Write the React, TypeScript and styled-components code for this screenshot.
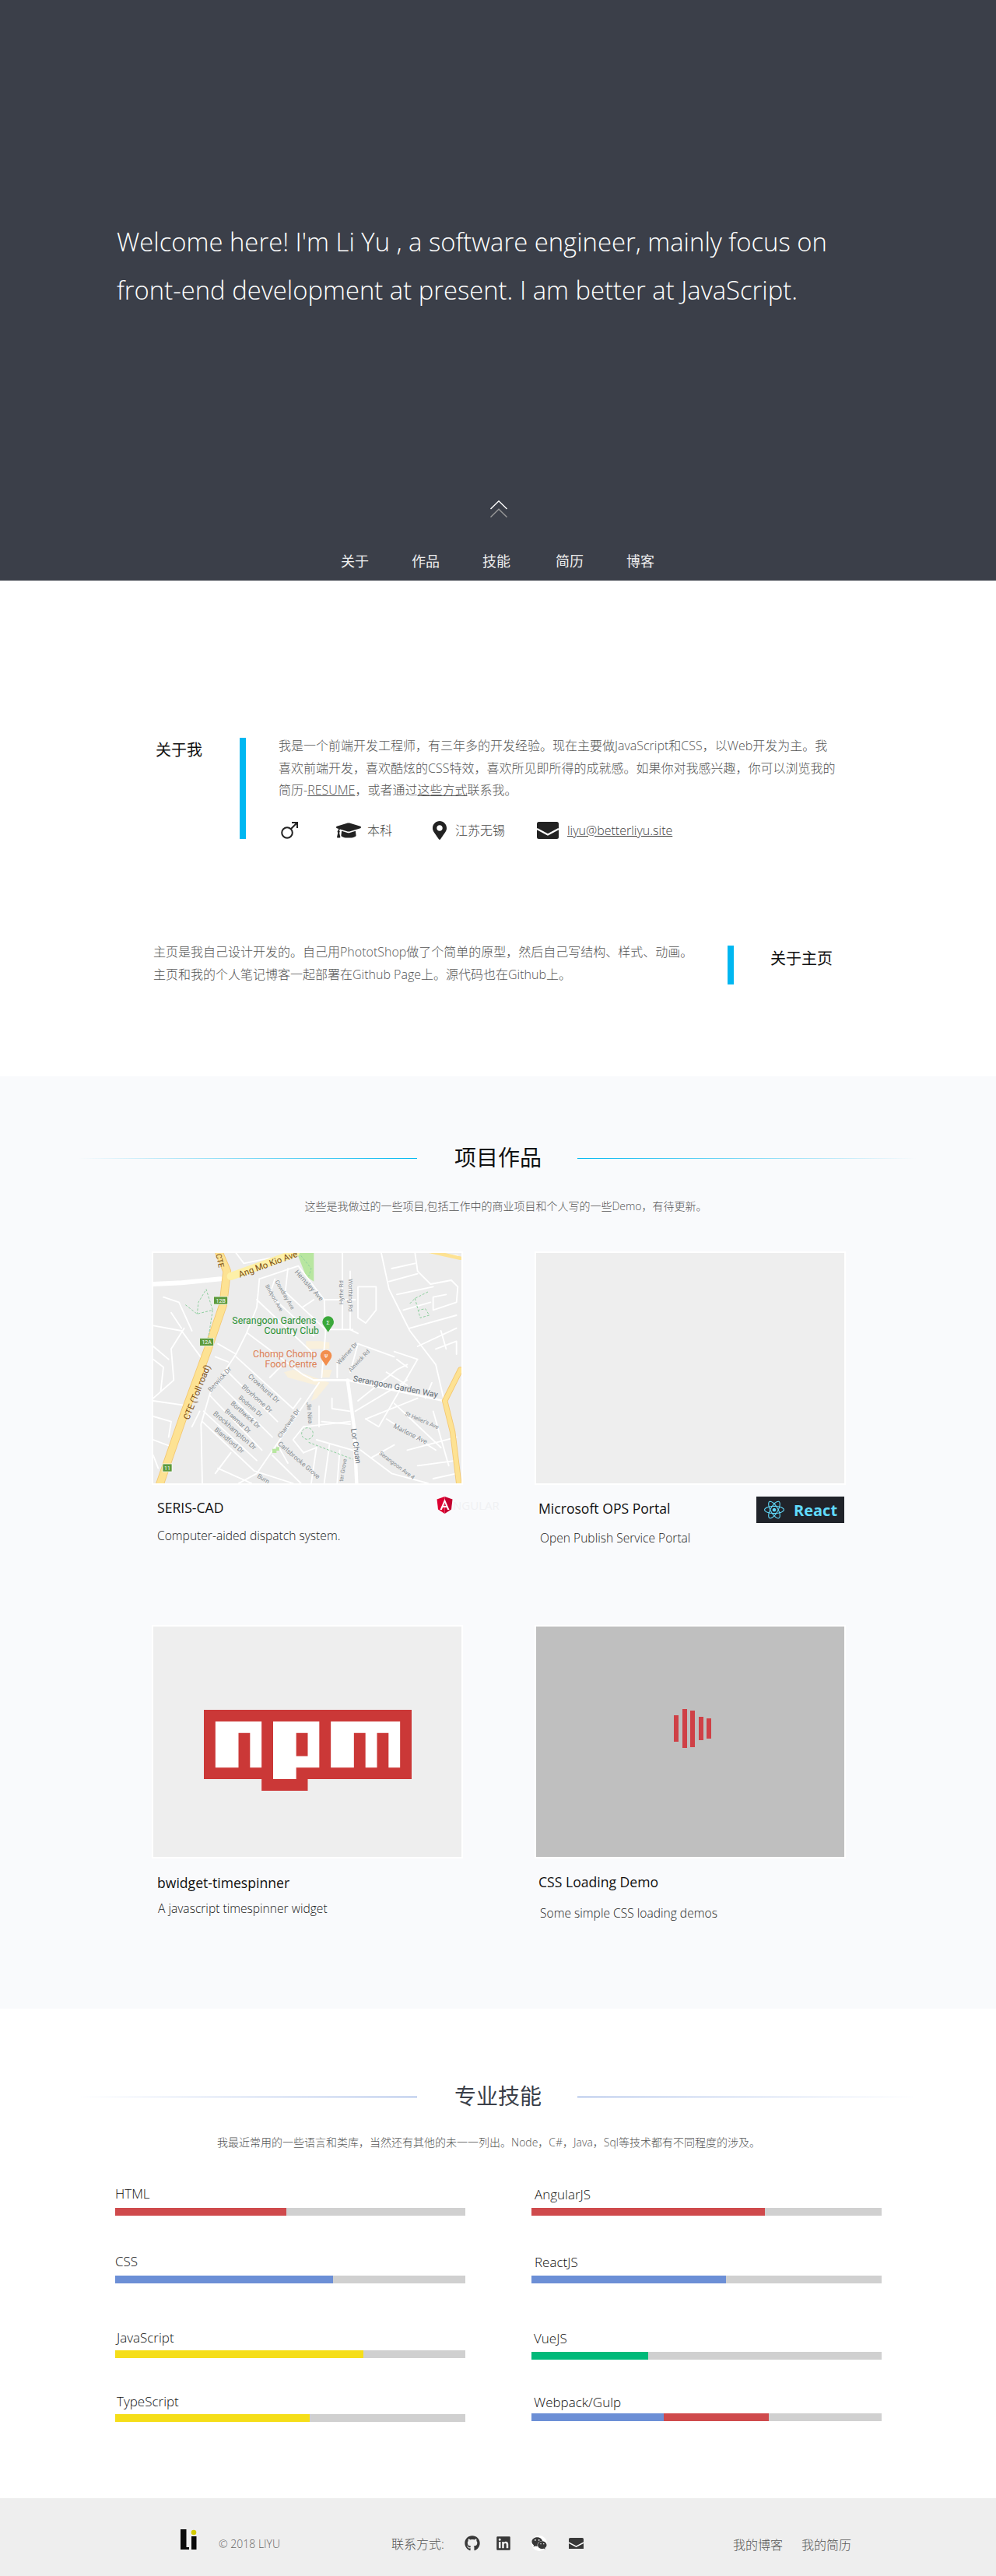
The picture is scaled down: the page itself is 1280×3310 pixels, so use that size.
import React from 'react';
import styled, { createGlobalStyle } from 'styled-components';
import { FaGithub, FaLinkedin, FaWeixin, FaReact, FaGraduationCap, FaMapMarkerAlt } from 'react-icons/fa';

const GlobalStyle = createGlobalStyle`
  html, body { margin: 0; padding: 0; background: #fff; }
  body {
    font-family: "Open Sans", "Noto Sans CJK SC", sans-serif;
    font-weight: 300;
    color: #444;
  }
  a { color: inherit; }
`;

const Page = styled.div`
  width: 1280px;
  height: 3310px;
  overflow: hidden;
`;

const Hero = styled.header`
  height: 746px;
  box-sizing: border-box;
  background: #3b3f49;
  color: #fff;
  display: flex;
  flex-direction: column;
  padding-top: 280px;
`;

const HeroText = styled.h1`
  margin: 0 0 0 150px;
  width: 1000px;
  font-size: 32.8px;
  line-height: 62px;
  font-weight: 300;
`;

const ChevronWrap = styled.div`
  margin: 239px 0 0 630px;
  height: 22px;
`;

const Nav = styled.nav`
  display: flex;
  margin: 44px 0 0 438px;
  gap: 55px;
  font-size: 18px;
  line-height: 24px;
  font-weight: 400;
  color: #eee;
`;

const NavItem = styled.span<{ $extra?: number }>`
  margin-left: ${(p) => p.$extra ?? 0}px;
`;

const AboutBlock = styled.section<{ $top: number }>`
  display: flex;
  align-items: flex-start;
  margin-top: ${(p) => p.$top}px;
`;

const SideTitle = styled.h3<{ $width: number; $indent: number; $down: number }>`
  margin: ${(p) => p.$down}px 0 0 ${(p) => p.$indent}px;
  width: ${(p) => p.$width}px;
  font-size: 20px;
  line-height: 28px;
  font-weight: 400;
  color: #111;
`;

const AccentBar = styled.div<{ $height: number; $top?: number; $left?: number }>`
  width: 8px;
  height: ${(p) => p.$height}px;
  margin: ${(p) => p.$top ?? 0}px 0 0 ${(p) => p.$left ?? 0}px;
  background: #00b7f1;
  flex: none;
`;

const AboutBody = styled.div`
  margin: -4px 0 0 42px;
  width: 720px;
  height: 134px;
  font-size: 16px;
  line-height: 28.5px;
  color: #555;
`;

const Paragraph = styled.p`
  margin: 0 0 0 197px;
  width: 700px;
  flex: none;
  font-size: 16px;
  line-height: 28.5px;
  color: #555;
`;

const InfoRow = styled.div`
  display: flex;
  align-items: center;
  height: 30px;
  margin-top: 22.5px;
  font-size: 16px;
  color: #444;
`;

const InfoItem = styled.span<{ $width: number; $gap?: number; $indent?: number }>`
  display: flex;
  align-items: center;
  gap: ${(p) => p.$gap ?? 8}px;
  width: ${(p) => p.$width}px;
  padding-left: ${(p) => p.$indent ?? 0}px;
  box-sizing: border-box;
`;

const ProjectSection = styled.section`
  margin-top: 117px;
  height: 1198px;
  box-sizing: border-box;
  background: #f9fafc;
  padding-top: 84px;
`;

const TitleRow = styled.div`
  display: flex;
  align-items: center;
  height: 40px;
  margin-left: 100px;
`;

const TitleLine = styled.div<{ $flip?: boolean; $color: string }>`
  width: 436px;
  height: 1px;
  margin-top: 2px;
  background: linear-gradient(${(p) => (p.$flip ? 'to left' : 'to right')}, transparent, ${(p) => p.$color});
`;

const SectionTitle = styled.h2<{ $color: string }>`
  margin: 0 46px 0 48px;
  width: 112px;
  font-size: 28px;
  line-height: 40px;
  font-weight: 400;
  color: ${(p) => p.$color};
  text-align: center;
`;

const SubTitle = styled.p<{ $top: number; $shift: number }>`
  margin: ${(p) => p.$top}px 0 0 ${(p) => p.$shift}px;
  font-size: 14px;
  line-height: 22px;
  text-align: center;
  color: #555;
`;

const CardGrid = styled.div`
  display: grid;
  grid-template-columns: 396px 396px;
  column-gap: 96px;
  row-gap: 184px;
  margin: 49px 0 0 197px;
`;

const Card = styled.article`
  height: 296px;
`;

const CardImage = styled.div<{ $bg: string }>`
  width: 396px;
  height: 296px;
  margin: -2px 0 0 -2px;
  border: 2px solid #fff;
  background: ${(p) => p.$bg};
  display: flex;
  align-items: center;
  justify-content: center;
  overflow: hidden;
  svg { display: block; }
`;

const CardHead = styled.div<{ $top: number; $indent: number }>`
  display: flex;
  align-items: center;
  height: 28px;
  margin-top: ${(p) => p.$top}px;
  padding-left: ${(p) => p.$indent}px;
  position: relative;
`;

const CardTitle = styled.h4`
  margin: 0;
  font-size: 17.6px;
  line-height: 28px;
  font-weight: 400;
  color: #111;
`;

const CardDesc = styled.p<{ $top: number; $indent: number }>`
  margin: ${(p) => p.$top}px 0 0 ${(p) => p.$indent}px;
  font-size: 15.6px;
  line-height: 24px;
  color: #222;
`;

const ReactBadge = styled.div`
  position: absolute;
  right: 0;
  top: -1px;
  width: 113px;
  height: 34px;
  background: #20232a;
  color: #61dafb;
  display: flex;
  align-items: center;
  gap: 12px;
  padding-left: 10px;
  box-sizing: border-box;
  font-size: 20px;
  font-weight: 700;
`;

const AngularBadge = styled.div`
  position: absolute;
  left: 364px;
  top: 0;
  display: flex;
  align-items: center;
  color: #f0f1f3;
  font-size: 15px;
  font-weight: 400;
`;

const NpmWrap = styled.div`
  margin-top: 22px;
`;

const LoaderBars = styled.div`
  display: flex;
  align-items: center;
  gap: 4.5px;
  margin: -34px 0 0 6px;
`;

const LoaderBar = styled.span<{ $h: number }>`
  width: 6px;
  height: ${(p) => p.$h}px;
  background: #cf4046;
`;

const SkillSection = styled.section`
  height: 629px;
  box-sizing: border-box;
  padding-top: 92px;
`;

const SkillGrid = styled.div`
  display: grid;
  grid-template-columns: 450px 450px;
  column-gap: 85px;
  margin: 43px 0 0 148px;
`;

const SkillColumn = styled.div`
  display: flex;
  flex-direction: column;
`;

const SkillItem = styled.div<{ $top: number }>`
  margin-top: ${(p) => p.$top}px;
`;

const SkillLabel = styled.div<{ $indent: number }>`
  font-size: 17px;
  line-height: 24px;
  color: #111;
  padding-left: ${(p) => p.$indent}px;
`;

const Track = styled.div<{ $gap: number }>`
  display: flex;
  height: 10px;
  margin-top: ${(p) => p.$gap}px;
  background: #d0d0d0;
`;

const Fill = styled.div<{ $color: string }>`
  height: 100%;
  background: ${(p) => p.$color};
`;

const Footer = styled.footer`
  height: 100px;
  background: #eee;
  display: flex;
  align-items: flex-start;
  color: #555;
  font-size: 16px;
  line-height: 20px;
`;

const Logo = styled.div`
  margin: 40px 0 0 232px;
  width: 49px;
  svg { display: block; }
`;

const Copyright = styled.span`
  margin-top: 49px;
  font-size: 14px;
  width: 222px;
  color: #666;
`;

const Contact = styled.span`
  margin-top: 49px;
  width: 93px;
`;

const Social = styled.div`
  display: flex;
  align-items: center;
  width: 346px;
  height: 24px;
  margin-top: 46px;
  color: #383838;
`;

const SocialSlot = styled.span<{ $left: number; $white?: boolean }>`
  display: flex;
  margin-left: ${(p) => p.$left}px;
  ${(p) => (p.$white ? 'background: #fff; border-radius: 50%;' : '')}
`;

const FootLinks = styled.div`
  display: flex;
  gap: 24px;
  margin-top: 50px;
`;

const Mail = ({ width, color }: { width: number; color: string }) => (
  <svg width={width} height={(width * 22) / 28} viewBox="0 0 28 22">
    <rect x="0" y="0" width="28" height="22" rx="2.5" fill={color} />
    <path d="M0 9 L14 16.5 L28 9" fill="none" stroke="#fff" strokeWidth="2.4" />
  </svg>
);

const MaleIcon = () => (
  <svg width="22" height="22" viewBox="0 0 22 22" fill="none" stroke="#222" strokeWidth="2">
    <circle cx="8" cy="14" r="6.8" />
    <path d="M13 9 L21 1 M14 1 H21 V8" />
  </svg>
);

const Road = styled.path<{ $w?: number }>`
  fill: none;
  stroke: #fff;
  stroke-width: ${(p) => p.$w ?? 5.5};
  stroke-linejoin: round;
  stroke-linecap: round;
`;

const MapLabel = styled.text<{ $size?: number; $color?: string }>`
  font-family: Roboto, sans-serif;
  font-size: ${(p) => p.$size ?? 24}px;
  fill: ${(p) => p.$color ?? '#868c92'};
  font-weight: 400;
`;

const streets = [
  'M430 130 L580 80', 'M430 130 L420 240 L380 340 L340 420 L240 570 L205 690 L210 918',
  'M540 90 L530 180 L680 320', 'M490 130 L470 190 L640 350', 'M420 210 L640 420', 'M595 240 L640 210',
  'M580 80 L680 210 L685 340 L670 510', 'M680 210 L800 210', 'M750 30 L750 325', 'M780 100 L780 325 L810 340', 'M690 325 L790 325',
  'M385 340 L600 500 L640 520', 'M340 430 L560 630', 'M300 480 L500 680', 'M270 530 L480 740', 'M240 580 L440 790', 'M215 640 L420 830', 'M210 680 L410 870 L560 918',
  'M660 530 L420 880 L350 918', 'M480 810 L590 918', 'M500 770 L540 840', 'M470 510 L520 460', 'M560 630 L590 590',
  'M600 700 L780 680', 'M600 700 L560 750 L600 800', 'M650 780 L630 918', 'M700 770 L680 918', 'M740 790 L730 918', 'M660 620 L660 700', 'M710 590 L710 630 L780 640', 'M670 680 L780 690', 'M600 800 L650 780',
  'M650 750 L790 790', 'M820 790 L940 880 L1080 918', 'M800 640 L1000 520', 'M840 670 L890 700 L1040 440 L950 410', 'M810 600 L960 480 L1000 460', 'M810 380 L950 430', 'M730 450 L730 510', 'M780 490 L810 380', 'M920 490 L1000 540', 'M960 440 L1000 470',
  'M900 30 L930 170 L1010 330 L1110 460 L1140 590', 'M1030 30 L1040 100 L1090 150 L1170 135 L1195 160 L1190 220 L1100 250 L1100 200 L1150 190', 'M930 140 L1040 110', 'M960 190 L1100 160', 'M985 250 L1090 220', 'M1010 320 L1190 270', 'M1040 390 L1190 320', 'M1110 400 L1190 370 L1190 420', 'M1130 330 L1150 400', 'M940 90 L1030 70', 'M1090 30 L1195 40',
  'M950 610 L1130 780', 'M920 670 L1110 790', 'M1100 640 L1160 850', 'M840 670 L1040 590', 'M860 820 L950 770', 'M1000 790 L1190 740', 'M1040 850 L1190 830', 'M1100 900 L1190 880', 'M1070 590 L1095 530',
  'M340 30 L370 70 L470 50', 'M810 160 L880 160 L880 250 L840 300 L810 280 Z', 'M21 310 L130 330 L210 440', 'M140 320 L90 400 L100 520 L21 590', 'M21 390 L80 440', 'M21 600 L160 620', 'M21 750 L100 780', 'M21 810 L40 860', 'M90 260 L130 320', 'M60 200 L120 220 L170 330',
  'M270 380 L340 420', 'M260 430 L310 450', 'M200 640 L170 700', 'M260 880 L320 800', 'M270 860 L400 918', 'M21 660 L90 680 L80 740', 'M21 440 L60 470 L50 560',
];

const SerangoonMap = () => (
  <svg width="396" height="296" viewBox="21 30 1188 888">
    <rect x="21" y="30" width="1188" height="888" fill="#ececec" />
    <path d="M575 30 L640 30 L640 140 L610 120 Z" fill="#b8e6a0" />
    <path d="M610 370 L665 370 L700 375 L700 400 L610 400 Z M525 490 L560 480 L700 530 L650 590 L630 600 L650 540 L540 510 Z M670 480 L710 480 L700 510 L670 510 Z" fill="#f9f0dc" />
    <g>
      {streets.map((d) => (
        <Road key={d} d={d} />
      ))}
      <Road d="M21 150 L130 145 L280 130" $w={18} />
      <Road d="M640 520 L770 520 L1140 600" $w={8} />
      <Road d="M770 520 L795 700 L805 918" $w={13} />
    </g>
    <g fill="none" strokeLinecap="round">
      <path d="M45 925 L140 650 L232 400 L290 230 L305 100 L275 30" stroke="#f3c66f" strokeWidth="32" />
      <path d="M45 925 L140 650 L232 400 L290 230 L305 100 L275 30" stroke="#fde293" strokeWidth="27" />
      <path d="M320 120 L570 30" stroke="#fdf0a8" strokeWidth="30" />
      <path d="M1205 480 L1145 600 L1175 720 L1200 925" stroke="#f3c66f" strokeWidth="22" />
      <path d="M1205 480 L1145 600 L1175 720 L1200 925" stroke="#fde293" strokeWidth="17" />
      <path d="M1090 25 L1205 50" stroke="#fde293" strokeWidth="14" />
    </g>
    <g fill="none" stroke="#8fcf9f" strokeWidth="3" strokeDasharray="9 6">
      <path d="M145 230 L190 265 L250 250 L225 170 L195 220 L190 265" />
      <path d="M250 250 L230 380" />
      <path d="M1080 180 L1030 205 L1010 225 M1030 205 L1050 280 L1085 270 L1070 245 L1045 250" />
      <path d="M630 710 A22 22 0 1 0 631 711 M620 760 L790 825" />
      <path d="M590 40 L630 90 L620 120" />
    </g>
    <rect x="480" y="785" width="16" height="16" fill="#b8e6a0" />
    <rect x="495" y="778" width="12" height="14" fill="#b8e6a0" />

    <MapLabel x="355" y="125" $size={34} $color="#7b4f16" transform="rotate(-20 355 125)">Ang Mo Kio Ave</MapLabel>
    <MapLabel x="262" y="35" $size={30} $color="#7b4f16" transform="rotate(78 262 35)">CTE</MapLabel>
    <MapLabel x="158" y="675" $size={34} $color="#7b4f16" transform="rotate(-68 158 675)">CTE (Toll road)</MapLabel>
    <MapLabel x="325" y="304" $size={37} $color="#2b9135">Serangoon Gardens</MapLabel>
    <MapLabel x="660" y="343" $size={37} $color="#2b9135" textAnchor="end">Country Club</MapLabel>
    <MapLabel x="652" y="431" $size={37} $color="#dd8157" textAnchor="end">Chomp Chomp</MapLabel>
    <MapLabel x="652" y="470" $size={37} $color="#dd8157" textAnchor="end">Food Centre</MapLabel>
    <MapLabel x="790" y="524" $size={32} $color="#616b75" transform="rotate(11 790 524)">Serangoon Garden Way</MapLabel>
    <MapLabel x="783" y="708" $size={30} $color="#616b75" transform="rotate(82 783 708)">Lor Chuan</MapLabel>
    <MapLabel x="565" y="105" $size={26} transform="rotate(48 565 105)">Hemsley Ave</MapLabel>
    <MapLabel x="452" y="157" $size={21} transform="rotate(60 452 157)">Bridport Ave</MapLabel>
    <MapLabel x="490" y="140" $size={22} transform="rotate(60 490 140)">Cowdray Ave</MapLabel>
    <MapLabel x="753" y="228" $size={23} transform="rotate(-90 753 228)">Hythe Rd</MapLabel>
    <MapLabel x="775" y="130" $size={23} transform="rotate(90 775 130)">Worthing Rd</MapLabel>
    <MapLabel x="738" y="462" $size={23} transform="rotate(-48 738 462)">Walmer Dr</MapLabel>
    <MapLabel x="783" y="490" $size={22} transform="rotate(-47 783 490)">Alnwick Rd</MapLabel>
    <MapLabel x="243" y="567" $size={25} transform="rotate(-48 243 567)">Berwick Dr</MapLabel>
    <MapLabel x="385" y="508" $size={26} transform="rotate(42 385 508)">Crowhurst Dr</MapLabel>
    <MapLabel x="360" y="548" $size={26} transform="rotate(42 360 548)">Bloxhome Dr</MapLabel>
    <MapLabel x="348" y="590" $size={24} transform="rotate(41 348 590)">Bodmin Dr</MapLabel>
    <MapLabel x="318" y="612" $size={25} transform="rotate(42 318 612)">Borthwick Dr</MapLabel>
    <MapLabel x="295" y="642" $size={25} transform="rotate(42 295 642)">Braemar Dr</MapLabel>
    <MapLabel x="250" y="652" $size={27} transform="rotate(41 250 652)">Brockhampton Dr</MapLabel>
    <MapLabel x="255" y="714" $size={25} transform="rotate(40 255 714)">Blandford Dr</MapLabel>
    <MapLabel x="512" y="745" transform="rotate(-55 512 745)">Chartwell Dr</MapLabel>
    <MapLabel x="612" y="606" transform="rotate(85 612 606)">Jln Nira</MapLabel>
    <MapLabel x="500" y="768" $size={25} transform="rotate(41 500 768)">Carlsbrooke Grove</MapLabel>
    <MapLabel x="990" y="655" $size={22} transform="rotate(23 990 655)">St Helier's Ave</MapLabel>
    <MapLabel x="945" y="703" $size={26} transform="rotate(27 945 703)">Marlene Ave</MapLabel>
    <MapLabel x="890" y="805" $size={22} transform="rotate(37 890 805)">Serangoon Ave 4</MapLabel>
    <MapLabel x="420" y="895" transform="rotate(30 420 895)">Burn</MapLabel>
    <MapLabel x="752" y="912" $size={22} transform="rotate(-80 752 912)">ter Grove</MapLabel>

    <g fill="#5c9a3c" stroke="#fff" strokeWidth="2">
      <rect x="254" y="198" width="54" height="30" />
      <rect x="200" y="358" width="54" height="30" />
      <rect x="57" y="843" width="36" height="30" />
    </g>
    <MapLabel x="281" y="221" $size={21} $color="#fff" textAnchor="middle">12B</MapLabel>
    <MapLabel x="227" y="381" $size={21} $color="#fff" textAnchor="middle">12A</MapLabel>
    <MapLabel x="75" y="866" $size={21} $color="#fff" textAnchor="middle">11</MapLabel>

    <path d="M695 335 L678 310 A22 22 0 1 1 712 310 Z" fill="#3aa83a" />
    <MapLabel x="695" y="307" $size={22} $color="#fff" textAnchor="middle">Σ</MapLabel>
    <path d="M687 465 L670 440 A22 22 0 1 1 704 440 Z" fill="#f28e4e" />
    <MapLabel x="687" y="435" $size={20} $color="#fff" textAnchor="middle">Ψ</MapLabel>
  </svg>
);

const AngularMark = () => (
  <svg width="21" height="22" viewBox="0 0 21 22">
    <path d="M10.5 0 L20.5 3.5 L19 16.5 L10.5 22 Z" fill="#c3002f" />
    <path d="M10.5 0 L0.5 3.5 L2 16.5 L10.5 22 Z" fill="#dd0031" />
    <path d="M10.5 3 L4.5 17 H6.8 L8 14 H13 L14.2 17 H16.5 Z M9 12 L10.5 7.5 L12 12 Z" fill="#fff" fillRule="evenodd" />
  </svg>
);

const NpmLogo = () => (
  <svg width="267" height="104" viewBox="0 0 18 7">
    <path d="M0 0h18v6H9v1H5V6H0V0z" fill="#cb3837" />
    <path d="M1 1v4h2V2h1v3h1V1H1zM6 1v5h2V5h2V1H6zM8 2h1v2H8V2zM11 1v4h2V2h1v3h1V2h1v3h1V1h-6z" fill="#fff" />
  </svg>
);

const LogoMark = () => (
  <svg width="21" height="27" viewBox="0 0 21 27">
    <rect x="0" y="0" width="7.5" height="26" fill="#0a0a0a" />
    <rect x="0" y="23" width="11" height="3" fill="#0a0a0a" />
    <rect x="14" y="9" width="6.5" height="17" fill="#0a0a0a" />
    <circle cx="17" cy="4" r="3.3" fill="#d3cb00" />
  </svg>
);

type Skill = { name: string; indent: number; top: number; gap: number; parts: [number, string][] };

const leftSkills: Skill[] = [
  { name: 'HTML', indent: 0, top: 0, gap: 6, parts: [[220, '#cf4a4c']] },
  { name: 'CSS', indent: 0, top: 47, gap: 6, parts: [[280, '#6c8fd6']] },
  { name: 'JavaScript', indent: 2, top: 58, gap: 4, parts: [[319, '#f5de19']] },
  { name: 'TypeScript', indent: 2, top: 44, gap: 4, parts: [[250, '#f5de19']] },
];

const rightSkills: Skill[] = [
  { name: 'AngularJS', indent: 4, top: 1, gap: 5, parts: [[300, '#cf4a4c']] },
  { name: 'ReactJS', indent: 4, top: 48, gap: 5, parts: [[250, '#6c8fd6']] },
  { name: 'VueJS', indent: 3, top: 59, gap: 5, parts: [[150, '#00b979']] },
  { name: 'Webpack/Gulp', indent: 3, top: 43, gap: 2, parts: [[170, '#6c8fd6'], [135, '#cf4a4c']] },
];

const SkillList = ({ items }: { items: Skill[] }) => (
  <SkillColumn>
    {items.map((s) => (
      <SkillItem key={s.name} $top={s.top}>
        <SkillLabel $indent={s.indent}>{s.name}</SkillLabel>
        <Track $gap={s.gap}>
          {s.parts.map(([w, c]) => (
            <Fill key={c} $color={c} style={{ width: w }} />
          ))}
        </Track>
      </SkillItem>
    ))}
  </SkillColumn>
);

export default function App() {
  return (
    <Page>
      <GlobalStyle />
      <Hero>
        <HeroText>
          Welcome here! I'm Li Yu , a software engineer, mainly focus on front-end development at present. I am better at JavaScript.
        </HeroText>
        <ChevronWrap>
          <svg width="22" height="22" viewBox="0 0 22 22" fill="none" strokeWidth="1.4">
            <path d="M0.5 11 L11 0.8 L21.5 11" stroke="#fff" />
            <path d="M0.5 21.5 L11 11.3 L21.5 21.5" stroke="#999" />
          </svg>
        </ChevronWrap>
        <Nav>
          <NavItem>关于</NavItem>
          <NavItem>作品</NavItem>
          <NavItem>技能</NavItem>
          <NavItem $extra={3}>简历</NavItem>
          <NavItem>博客</NavItem>
        </Nav>
      </Hero>

      <AboutBlock $top={202}>
        <SideTitle $width={108} $indent={200} $down={2}>关于我</SideTitle>
        <AccentBar $height={130} />
        <AboutBody>
          我是一个前端开发工程师，有三年多的开发经验。现在主要做JavaScript和CSS，以Web开发为主。我喜欢前端开发，喜欢酷炫的CSS特效，喜欢所见即所得的成就感。如果你对我感兴趣，你可以浏览我的简历-<a href="#resume">RESUME</a>，或者通过<a href="#contact">这些方式</a>联系我。
          <InfoRow>
            <InfoItem $width={74} $indent={3}><MaleIcon /></InfoItem>
            <InfoItem $width={121}><FaGraduationCap size={32} color="#222" />本科</InfoItem>
            <InfoItem $width={137}><FaMapMarkerAlt size={24} color="#222" />江苏无锡</InfoItem>
            <InfoItem $width={200} $gap={11}><Mail width={28} color="#222" /><a href="#mail">liyu@betterliyu.site</a></InfoItem>
          </InfoRow>
        </AboutBody>
      </AboutBlock>

      <AboutBlock $top={131}>
        <Paragraph>
          主页是我自己设计开发的。自己用PhototShop做了个简单的原型，然后自己写结构、样式、动画。主页和我的个人笔记博客一起部署在Github Page上。源代码也在Github上。
        </Paragraph>
        <AccentBar $height={50} $top={6} $left={38} />
        <SideTitle $width={90} $indent={47} $down={9}>关于主页</SideTitle>
      </AboutBlock>

      <ProjectSection>
        <TitleRow>
          <TitleLine $color="#00b7f1" />
          <SectionTitle $color="#111">项目作品</SectionTitle>
          <TitleLine $flip $color="#00b7f1" />
        </TitleRow>
        <SubTitle $top={32} $shift={20}>这些是我做过的一些项目,包括工作中的商业项目和个人写的一些Demo，有待更新。</SubTitle>
        <CardGrid>
          <Card>
            <CardImage $bg="#ececec"><SerangoonMap /></CardImage>
            <CardHead $top={15} $indent={5}>
              <CardTitle>SERIS-CAD</CardTitle>
              <AngularBadge><AngularMark />NGULAR</AngularBadge>
            </CardHead>
            <CardDesc $top={10} $indent={5}>Computer-aided dispatch system.</CardDesc>
          </Card>
          <Card>
            <CardImage $bg="#eeeeee" />
            <CardHead $top={16} $indent={3}>
              <CardTitle>Microsoft OPS Portal</CardTitle>
              <ReactBadge><FaReact size={26} />React</ReactBadge>
            </CardHead>
            <CardDesc $top={12} $indent={5}>Open Publish Service Portal</CardDesc>
          </Card>
          <Card>
            <CardImage $bg="#eeeeee"><NpmWrap><NpmLogo /></NpmWrap></CardImage>
            <CardHead $top={17} $indent={5}>
              <CardTitle>bwidget-timespinner</CardTitle>
            </CardHead>
            <CardDesc $top={7} $indent={6}>A javascript timespinner widget</CardDesc>
          </Card>
          <Card>
            <CardImage $bg="#bfbfbf">
              <LoaderBars>
                <LoaderBar $h={34} />
                <LoaderBar $h={50} />
                <LoaderBar $h={47} />
                <LoaderBar $h={30} />
                <LoaderBar $h={26} />
              </LoaderBars>
            </CardImage>
            <CardHead $top={16} $indent={3}>
              <CardTitle>CSS Loading Demo</CardTitle>
            </CardHead>
            <CardDesc $top={14} $indent={5}>Some simple CSS loading demos</CardDesc>
          </Card>
        </CardGrid>
      </ProjectSection>

      <SkillSection>
        <TitleRow>
          <TitleLine $color="#6c8fd6" />
          <SectionTitle $color="#3b3f49">专业技能</SectionTitle>
          <TitleLine $flip $color="#6c8fd6" />
        </TitleRow>
        <SubTitle $top={29} $shift={-24}>我最近常用的一些语言和类库，当然还有其他的未一一列出。Node，C#，Java，Sql等技术都有不同程度的涉及。</SubTitle>
        <SkillGrid>
          <SkillList items={leftSkills} />
          <SkillList items={rightSkills} />
        </SkillGrid>
      </SkillSection>

      <Footer>
        <Logo><LogoMark /></Logo>
        <Copyright>© 2018 LIYU</Copyright>
        <Contact>联系方式:</Contact>
        <Social>
          <SocialSlot $left={1}><FaGithub size={20} /></SocialSlot>
          <SocialSlot $left={20}><FaLinkedin size={20} /></SocialSlot>
          <SocialSlot $left={26} $white><FaWeixin size={20} /></SocialSlot>
          <SocialSlot $left={28}><Mail width={19} color="#383838" /></SocialSlot>
        </Social>
        <FootLinks>
          <span>我的博客</span>
          <span>我的简历</span>
        </FootLinks>
      </Footer>
    </Page>
  );
}
